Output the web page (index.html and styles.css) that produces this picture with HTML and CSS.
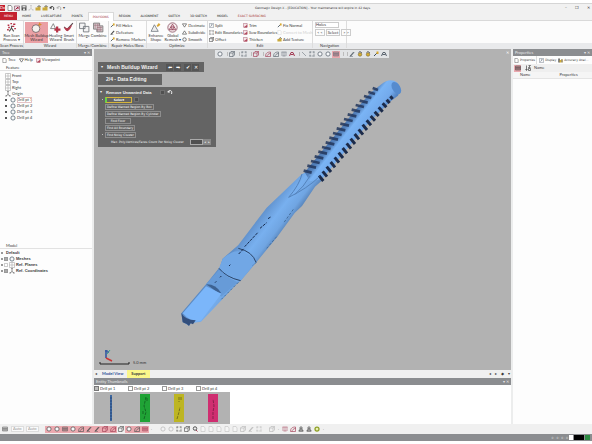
FILE: index.html
```html
<!DOCTYPE html>
<html lang="en">
<head>
<meta charset="utf-8">
<title>Geomagic Design X</title>
<link rel="stylesheet" href="styles.css">
</head>
<body>
<svg class="sprite" aria-hidden="true">
  <symbol id="page" viewBox="0 0 12 12"><path d="M2 1h6l2 3v7H2z" fill="#fff" stroke="currentColor"/></symbol>
  <symbol id="disk" viewBox="0 0 12 12"><path d="M1 1h10v10H1z" fill="#555"/><path d="M3 2h6v3H3zM4 7h4v4H4z" fill="#ddd"/></symbol>
  <symbol id="folder" viewBox="0 0 12 12"><path d="M1 5h4l1-2h5v8H1z" fill="#c9a93c"/><path d="M5 4l3-3 3 3" fill="none" stroke="#333" stroke-width="1.5"/></symbol>
  <symbol id="import" viewBox="0 0 12 12"><path d="M1 2h10v9H1z" fill="#eadde4" stroke="#6c3145"/><path d="M3 9l5-5v4" fill="none" stroke="#a22441" stroke-width="2"/></symbol>
  <symbol id="undo" viewBox="0 0 12 12"><path d="M3 5c4-4 8-1 6 5" fill="none" stroke="currentColor" stroke-width="2"/><path d="M0 6l5-4v6z" fill="currentColor"/></symbol>
  <symbol id="ball" viewBox="0 0 12 12"><circle cx="6" cy="6" r="4.2" fill="#f6f8fa" stroke="currentColor" stroke-width="1.5"/></symbol>
  <symbol id="cube" viewBox="0 0 12 12"><path d="M1 4l3-3h7v7l-3 3H1zM1 4h7v7M8 4l3-3" fill="none" stroke="currentColor" stroke-width="1.3"/></symbol>
  <symbol id="rect" viewBox="0 0 12 12"><path d="M2 2h8v8H2z" fill="none" stroke="currentColor" stroke-dasharray="2 1"/><path d="M1 1h2v2H1zM9 1h2v2H9zM1 9h2v2H1zM9 9h2v2H9z" fill="currentColor"/></symbol>
  <symbol id="mesh" viewBox="0 0 12 12"><path d="M1 2h10v8H1zM1 5h10M1 7.500h10M4 2v8M8 2v8" fill="none" stroke="currentColor"/></symbol>
  <symbol id="plane" viewBox="0 0 12 12"><path d="M1 1h10v10H1zM1 6h10M6 1v10" fill="#fff" stroke="#999"/></symbol>
  <symbol id="axes" viewBox="0 0 12 12"><path d="M6 1v6M6 7l-4 3M6 7l4 3" fill="none" stroke="#555" stroke-width="1.3"/><path d="M5 0h2v2H5zM1 9h2v2H1zM9 9h2v2H9z" fill="#555"/></symbol>
  <symbol id="pen" viewBox="0 0 12 12"><path d="M2 10l7-8 1 1-6 7z" fill="currentColor" stroke="currentColor"/><path d="M1 11h7" stroke="currentColor"/></symbol>
  <symbol id="line" viewBox="0 0 12 12"><path d="M2 2l8 8" stroke="currentColor"/></symbol>
  <symbol id="patch" viewBox="0 0 12 12"><path d="M1 11C1 4 5 2 11 2v9zM4 11c0-3 3-6 7-6" fill="none" stroke="currentColor" stroke-width="1.3"/></symbol>
  <symbol id="tee" viewBox="0 0 12 12"><path d="M1 2h10M6 2v8M3 10h6M2 2v8M10 2v8" fill="none" stroke="currentColor"/></symbol>
  <symbol id="arch" viewBox="0 0 12 12"><path d="M1 10l3-7h4l3 7M3 7h6" fill="none" stroke="currentColor" stroke-width="2"/></symbol>
  <symbol id="sort" viewBox="0 0 12 12"><path d="M3 1v9M1 8l2 3 2-3M7 1h4L7 5h4M7 7h4v4H7z" fill="none" stroke="currentColor" stroke-width="1.3"/></symbol>
  <symbol id="tri" viewBox="0 0 12 12"><path d="M6 2l5 8H1z" fill="none" stroke="currentColor" stroke-width="1.4"/></symbol>
  <symbol id="funnel" viewBox="0 0 12 12"><path d="M1 2h10L6 10z" fill="none" stroke="currentColor" stroke-width="1.4"/></symbol>
  <symbol id="gold" viewBox="0 0 12 12"><circle cx="6" cy="7" r="3.500" fill="#d5af35" stroke="#65552a"/><path d="M3 3l3-2 4 3" fill="none" stroke="#444" stroke-width="1.5"/></symbol>
  <symbol id="gear" viewBox="0 0 12 12"><circle cx="6" cy="6" r="4" fill="#e8eeb0" stroke="#8d9f25" stroke-width="2.500"/></symbol>
  <symbol id="find" viewBox="0 0 12 12"><circle cx="6" cy="5" r="3.500" fill="#eee" stroke="currentColor" stroke-width="2"/><path d="M8 8l3 3" stroke="#a33c54" stroke-width="2"/></symbol>
  <symbol id="tool" viewBox="0 0 12 12"><path d="M2 10l6-6" stroke="#3c4c59" stroke-width="2"/><path d="M7 1h4v5H7z" fill="#d8a62a"/></symbol>
  <symbol id="redbox" viewBox="0 0 12 12"><path d="M1 1h9v9H1z" fill="#f6e4e8" stroke="#8f3a4d"/><path d="M2 10l8-6v7H2z" fill="#b3475c"/></symbol>
  <symbol id="bluebox" viewBox="0 0 12 12"><path d="M1 1h10v10H1zM3 9l6-6M6 2v4" fill="#f4f5f7" stroke="#5b6674"/></symbol>
  <symbol id="person" viewBox="0 0 12 12"><path d="M4 2h4v4H4zM2 10l2-4h4l2 4zM1 10h10" fill="none" stroke="currentColor" stroke-width="1.4"/></symbol>
  <symbol id="chart" viewBox="0 0 12 12"><path d="M1 1h3v10H1z" fill="#333"/><path d="M4 5h3v6H4z" fill="#d5aa22"/><path d="M8 3h3v8H8z" fill="#7b651f"/></symbol>
  <symbol id="scan" viewBox="0 0 20 20"><path d="M3 6h3M8 3h3M13 4h4M4 10h3M11 8h4M2 14h3M15 12h3" stroke="#b52f44" stroke-width="2.500"/><path d="M6 17l4-6 4 6M10 11V7" fill="none" stroke="#555" stroke-width="2"/></symbol>
  <symbol id="build" viewBox="0 0 20 20"><circle cx="9" cy="12" r="7" fill="#f5f1ee" stroke="#6e6063" stroke-width="1.500"/><path d="M14 4l2-4 1 3 3 1-3 2-1 3-1-3-3-1z" fill="#d78d30"/></symbol>
  <symbol id="heal" viewBox="0 0 20 20"><path d="M1 12l5-9 4 9z" fill="none" stroke="#777" stroke-width="1.500"/><path d="M11 8h4v4h4v4h-4v3h-4v-3H8v-4h3z" fill="#b73346"/></symbol>
  <symbol id="brush" viewBox="0 0 20 20"><path d="M2 9l5 5L18 2" fill="none" stroke="#5a4a50" stroke-width="2"/><path d="M2 10c4 0 5 3 8 0 3-2 5-3 7-6-2 7-5 11-9 13-3-1-5-4-6-7z" fill="#b53a4c"/></symbol>
  <symbol id="merge" viewBox="0 0 20 20"><path d="M1 2h10v10H1zM8 8h10v10H8z" fill="#f4f4f5" stroke="#6c7177" stroke-width="1.500"/></symbol>
  <symbol id="combine" viewBox="0 0 20 20"><path d="M1 2h11v5h6v11H7v-5H1z" fill="#dccdd1" stroke="#777" stroke-width="1.500"/><path d="M4 3v9M8 3v14M11 3v14M14 8v9M2 6h9M7 10h10M7 14h10" stroke="#996b75"/></symbol>
  <symbol id="enhance" viewBox="0 0 20 20"><path d="M2 17L8 5l7 12z" fill="#eee" stroke="#727981" stroke-width="1.500"/><path d="M12 7l4-5 3 3-5 4z" fill="#d8a633"/></symbol>
  <symbol id="remesh" viewBox="0 0 20 20"><circle cx="10" cy="10" r="8.500" fill="#f5eaec" stroke="#8e5968" stroke-width="1.500"/><path d="M4 14l6-10 6 10zM7 9h6l-3 5z" fill="none" stroke="#944257" stroke-width="1.500"/></symbol>
</svg>

<header class="titlebar">
  <div class="quick">
    <button class="logo" aria-label="Application">Dx</button>
    <button aria-label="New"><svg><use href="#page"/></svg></button>
    <button aria-label="Import"><svg><use href="#import"/></svg></button>
    <button aria-label="Save"><svg><use href="#disk"/></svg></button>
    <button class="dim" aria-label="Settings"><svg><use href="#axes"/></svg></button>
    <button aria-label="Open"><svg><use href="#folder"/></svg></button>
    <button aria-label="Export"><svg><use href="#folder"/></svg></button>
    <button aria-label="Undo"><svg><use href="#undo"/></svg></button>
    <button class="dim" aria-label="Redo"><svg><use href="#undo"/></svg></button>
    <span>▾</span>
  </div>
  <h1>Geomagic Design X - [EDUCATION] - Your maintenance will expire in 42 days.</h1>
  <div class="window-buttons"><button aria-label="Minimize">–</button><button aria-label="Restore">❐</button><button aria-label="Close">✕</button></div>
</header>

<nav class="tabs">
  <button class="menu">MENU</button><button>HOME</button><button>LIVECAPTURE</button><button>POINTS</button><button class="active">POLYGONS</button><button>REGION</button><button>ALIGNMENT</button><button>SKETCH</button><button>3D SKETCH</button><button>MODEL</button><button class="red">EXACT SURFACING</button>
</nav>

<section class="ribbon">
  <div class="group">
    <div class="tools"><button class="big"><svg><use href="#scan"/></svg>Run Scan<br>Process ▾</button></div>
    <h2>Scan Process</h2>
  </div>
  <div class="group">
    <div class="tools wizards">
      <button class="big pressed"><svg><use href="#build"/></svg>Mesh Buildup<br>Wizard</button>
      <button class="big"><svg><use href="#heal"/></svg>Healing<br>Wizard</button>
      <button class="big"><svg><use href="#brush"/></svg>Smart<br>Brush</button>
    </div>
    <h2>Wizard</h2>
  </div>
  <div class="group">
    <div class="tools">
      <button class="big"><svg><use href="#merge"/></svg>Merge</button>
      <button class="big"><svg><use href="#combine"/></svg>Combine</button>
    </div>
    <h2>Merge/Combine</h2>
  </div>
  <div class="group">
    <div class="tools">
      <div class="stack">
        <button><svg><use href="#tool"/></svg>Fill Holes</button>
        <button><svg><use href="#pen"/></svg>Defeature</button>
        <button><svg><use href="#tool"/></svg>Remove Markers</button>
      </div>
    </div>
    <h2>Repair Holes/Boss</h2>
  </div>
  <div class="group">
    <div class="tools">
      <button class="big"><svg><use href="#enhance"/></svg>Enhance<br>Shape</button>
      <button class="big"><svg><use href="#remesh"/></svg>Global<br>Remesh ▾</button>
      <div class="stack">
        <button><svg><use href="#funnel"/></svg>Decimate</button>
        <button><svg><use href="#tri"/></svg>Subdivide</button>
        <button><svg><use href="#ball"/></svg>Smooth</button>
      </div>
    </div>
    <h2>Optimize</h2>
  </div>
  <div class="group">
    <div class="tools edit">
      <div class="stack">
        <button><svg><use href="#bluebox"/></svg>Split</button>
        <button><svg><use href="#rect"/></svg>Edit Boundaries</button>
        <button><svg><use href="#cube"/></svg>Offset</button>
      </div>
      <div class="stack">
        <button><svg><use href="#redbox"/></svg>Trim</button>
        <button><svg><use href="#redbox"/></svg>Sew Boundaries</button>
        <button><svg><use href="#redbox"/></svg>Thicken</button>
      </div>
      <div class="stack">
        <button><svg><use href="#tool"/></svg>Fix Normal</button>
        <button disabled><svg><use href="#page"/></svg>Convert to Mesh</button>
        <button><svg><use href="#folder"/></svg>Add Texture</button>
      </div>
    </div>
    <h2>Edit</h2>
  </div>
  <div class="group">
    <div class="tools nav">
      <select aria-label="Navigate by"><option>Holes</option></select>
      <div class="step"><button>&lt; &lt;</button><button>Select</button><button>&gt; &gt;</button></div>
    </div>
    <h2>Navigation</h2>
  </div>
  <div class="group last"><div class="tools"></div><h2></h2></div>
</section>

<main>
  <aside class="left">
    <header class="panel-head"><span>Tree</span><span class="pins">▾ ✕</span></header>
    <div class="panel-tabs"><button><svg><use href="#page"/></svg>Tree</button><button><svg><use href="#funnel"/></svg>Help</button><button><svg><use href="#redbox"/></svg>Viewpoint</button></div>
    <section class="feature">
      <h3>Feature</h3>
      <ul>
        <li><svg><use href="#plane"/></svg>Front</li>
        <li><svg><use href="#plane"/></svg>Top</li>
        <li><svg><use href="#plane"/></svg>Right</li>
        <li><svg><use href="#axes"/></svg>Origin</li>
        <li class="mesh"><i></i><svg><use href="#ball"/></svg><b>Drill pt 1</b></li>
        <li class="mesh"><i></i><svg><use href="#ball"/></svg>Drill pt 2</li>
        <li class="mesh"><i></i><svg><use href="#ball"/></svg>Drill pt 3</li>
        <li class="mesh"><i></i><svg><use href="#ball"/></svg>Drill pt 4</li>
      </ul>
    </section>
    <section class="model">
      <h3>Model</h3>
      <ul>
        <li class="root"><i></i>Default</li>
        <li><i></i><em></em><svg><use href="#ball"/></svg>Meshes</li>
        <li><i></i><em class="off"></em><svg><use href="#plane"/></svg>Ref. Planes</li>
        <li><i></i><em></em><svg><use href="#axes"/></svg>Ref. Coordinates</li>
      </ul>
    </section>
  </aside>

  <section class="center">
    <div class="viewport">
      <svg class="drill" viewBox="0 0 720 795" role="img" aria-label="Drill mesh">
        <defs>
          <linearGradient id="body" gradientUnits="userSpaceOnUse" x1="275" y1="400" x2="365" y2="468">
            <stop offset="0" stop-color="#527fb6"/><stop offset=".22" stop-color="#6597d3"/><stop offset=".5" stop-color="#78b0ef"/><stop offset=".75" stop-color="#70a5e2"/><stop offset="1" stop-color="#4a71a3"/>
          </linearGradient>
          <linearGradient id="flute" gradientUnits="userSpaceOnUse" x1="484" y1="165" x2="562" y2="226">
            <stop offset="0" stop-color="#3f5e8e"/><stop offset=".38" stop-color="#5482bd"/><stop offset=".52" stop-color="#7ab4f5"/><stop offset=".82" stop-color="#73aaec"/><stop offset="1" stop-color="#5485c5"/>
          </linearGradient>
        </defs>
        <path d="M396 312L424 300 448 318 455 332 435 350 396 408 374 429 322 500 258 578 212 632 196 646 158 687 93 755 62 760 57 767 48 762 38 756 34 730 108 643 150 590 158 566 205 525 290 413z" fill="url(#body)"/>
        <path d="M404 307L437 266 496 194 557 119 600 70 634 43Q660 22 682 38Q697 56 684 77L662 94 600 154 457 326 420 334z" fill="url(#flute)"/>
        <path d="M401 302l24 6M412 287l26 6M423 273l26 6M434 259l26 6M445 245l26 6M456 231l26 6M467 217l26 6M478 203l26 6M489 189l26 6M500 175l26 6M511 161l26 6M522 147l26 6M533 133l26 6M545 119l25 6M557 105l25 6M569 92l24 6M582 78l22 6M595 66l20 6M608 54l16 6" fill="none" stroke="#22365c" stroke-width="8" opacity=".85"/>
        <path d="M447 317l13 16M458 304l13 16M470 290l13 16M482 276l13 16M494 262l13 16M506 248l13 16M518 234l13 16M530 220l13 16M542 206l13 16M554 192l13 16M566 178l13 16M578 164l13 16M590 151l13 15M602 138l13 14M614 125l12 13M626 112l12 13M638 100l11 12M650 89l9 10M661 79l7 8" fill="none" stroke="#1c2b4a" stroke-width="9"/>
        <path d="M396 312Q388 345 356 382Q412 355 448 320M420 318Q402 350 374 374" fill="none" stroke="#5583bb" stroke-width="3"/>
        <path d="M158 566Q190 538 210 545Q247 552 258 577L212 632Q168 620 147 595z" fill="#71a7e5"/>
        <path d="M205 535Q248 545 258 577M147 595Q168 622 212 632" fill="none" stroke="#2b4366" stroke-width="3"/>
        <path d="M147 599Q174 623 202 637L154 680 108 643z" fill="#679bd8"/>
        <path d="M108 643Q138 642 154 670L145 668z" fill="#3d6292"/>
        <path d="M108 649L154 671 93 752Q65 759 38 730z" fill="#7bb6fa"/>
        <path d="M34 729Q45 750 77 751L69 763 62 760 57 768 50 762 38 757z" fill="#334f7c"/>
        <path d="M206 552L221 536M224 530L264 487M270 475L290 458M294 446L302 441M135 638l4-4M150 622l4-4M177 588l4-4" fill="none" stroke="#172b4e" stroke-width="3" stroke-dasharray="9 3"/>
        <path d="M320 500L290 535M260 576L248 586M205 637L154 688M370 418L340 460" stroke="#46709f" stroke-width="3" stroke-dasharray="8 5"/>
        <ellipse cx="679" cy="54" rx="12" ry="20" transform="rotate(-32 679 54)" fill="#568bce"/>
      </svg>

      <div class="view-tools">
        <button aria-label="Shading"><svg><use href="#ball"/></svg></button><span></span>
        <button aria-label="View cube"><svg><use href="#cube"/></svg></button><span></span>
        <button aria-label="View"><svg><use href="#rect"/></svg></button><span></span>
        <button class="wine" aria-label="Mesh"><svg><use href="#cube"/></svg></button><span></span>
        <button class="wine" aria-label="Region"><svg><use href="#patch"/></svg></button>
        <button aria-label="Surface"><svg><use href="#patch"/></svg></button>
        <button aria-label="Text"><svg><use href="#tee"/></svg></button>
        <button class="wine" aria-label="Curve"><svg><use href="#arch"/></svg></button><span></span>
        <button aria-label="Line select"><svg><use href="#line"/></svg></button>
        <button aria-label="Rectangle select"><svg><use href="#rect"/></svg></button>
        <button aria-label="Circle select"><svg><use href="#ball"/></svg></button>
        <button aria-label="Polyline select"><svg><use href="#ball"/></svg></button>
        <button class="on" aria-label="Freehand select"><svg><use href="#mesh"/></svg></button><span></span><span></span>
        <button aria-label="Paint"><svg><use href="#pen"/></svg></button>
        <button aria-label="Flood"><svg><use href="#gold"/></svg></button>
        <button aria-label="Extend"><svg><use href="#gold"/></svg></button>
        <button aria-label="Visible only"><svg><use href="#tool"/></svg></button>
        <button aria-label="More"><svg><use href="#arch"/></svg></button>
      </div>
      <span class="view-close">✕</span>

      <div class="wizard">
        <div class="card bar"><span>▾</span><h2>Mesh Buildup Wizard</h2><button aria-label="Back">⬅</button><button aria-label="Next">➡</button><button class="gap" aria-label="OK">✔</button><button aria-label="Cancel">✕</button></div>
        <div class="card stage"><h2>2/4 - Data Editing</h2></div>
        <div class="card form">
          <div class="form-head"><span>▾</span><h3>Remove Unwanted Data</h3><button class="sq" aria-label="Options"></button><button aria-label="Undo"><svg><use href="#undo"/></svg></button></div>
          <div class="row first"><button class="select">Select</button><button class="sq" aria-label="Clear"></button></div>
          <div class="row"><button>Define Wanted Region By Box</button></div>
          <div class="row"><button>Define Wanted Region By Cylinder</button></div>
          <div class="row"><button class="wide">Find Floor</button></div>
          <div class="row"><button>Find All Boundary</button></div>
          <div class="row first"><button>Find Noisy Cluster</button></div>
          <div class="count"><label for="count">Max. Poly-Vertices/Faces Count Per Noisy Cluster</label><input id="count" type="text"><button aria-label="Decrease">◂</button><button aria-label="Increase">▸</button></div>
        </div>
      </div>

      <div class="scale">
        <svg viewBox="0 0 34 18" role="img" aria-label="Axes and scale"><path d="M8 10V2" stroke="#2850a0" stroke-width="1.500"/><path d="M8 10l6 3" stroke="#c33" stroke-width="1.500"/><path d="M9 6l3-4" stroke="#3a8"/><path d="M7 3h3v2" fill="none" stroke="#2850a0"/><path d="M2 14v2h29v-2" fill="none" stroke="#222"/></svg>
        <span>5.0 mm</span>
      </div>
    </div>
    <div class="view-tabs"><span>◂</span><button class="blue">Model View</button><button class="yellow">Support</button><span class="pager"><i>◂</i><i>▸</i><i>◆</i><i>▾</i></span></div>
    <section class="thumbs">
      <header class="panel-head"><span>Entity Thumbnails</span><span class="pins">▾ ✕</span></header>
      <div class="thumb-grid">
        <figure><figcaption><input type="checkbox" id="d1" checked><label for="d1">Drill pt 1</label></figcaption><div><svg viewBox="0 0 10 28"><path d="M4 1h2v26H4z" fill="#3f689f"/><path d="M5 3v23" stroke="#29497d" stroke-dasharray="2 1"/></svg></div></figure>
        <figure><figcaption><input type="checkbox" id="d2"><label for="d2">Drill pt 2</label></figcaption><div><svg viewBox="0 0 10 28"><path d="M0 0h10v28H0z" fill="#20a336"/><path d="M4 25l2-7-2-6 2-9M7 4v4M3 17v3" fill="none" stroke="#126a23" stroke-dasharray="3 1"/></svg></div></figure>
        <figure><figcaption><input type="checkbox" id="d3"><label for="d3">Drill pt 3</label></figcaption><div><svg viewBox="0 0 10 28"><path d="M0 0h10v28H0z" fill="#bdb522"/><path d="M3 25l2-7 1-5M5 3v5M7 3v4" fill="none" stroke="#79731b" stroke-dasharray="3 1"/></svg></div></figure>
        <figure><figcaption><input type="checkbox" id="d4"><label for="d4">Drill pt 4</label></figcaption><div><svg viewBox="0 0 10 28"><path d="M0 0h10v28H0z" fill="#cf2e70"/><path d="M5 25v-7l1-6-1-7" fill="none" stroke="#8b1f4c" stroke-dasharray="3 1"/></svg></div></figure>
      </div>
    </section>
  </section>

  <aside class="right">
    <header class="panel-head"><span>Properties</span><span class="pins">▾ ✕</span></header>
    <div class="panel-tabs"><button class="current"><svg><use href="#page"/></svg>Properties</button><button><svg><use href="#bluebox"/></svg>Display</button><button><svg><use href="#chart"/></svg>Accuracy Anal...</button></div>
    <div class="sort"><button class="on" aria-label="Categorized"><svg><use href="#mesh"/></svg></button><button aria-label="Sort"><svg><use href="#sort"/></svg></button><span>Name</span></div>
    <table><thead><tr><th>Name</th><th>Properties</th></tr></thead></table>
  </aside>
</main>

<footer>
  <div class="filters">
    <button class="pick" aria-label="Pick"><svg><use href="#mesh"/></svg></button>
    <select aria-label="Linear unit"><option>Auto</option></select>
    <select aria-label="Angular unit"><option>Auto</option></select>
    <button class="on start" aria-label="Filter mesh"><svg><use href="#ball"/></svg></button>
    <button class="on" aria-label="Filter region"><svg><use href="#ball"/></svg></button>
    <button class="on" aria-label="Filter cloud"><svg><use href="#mesh"/></svg></button>
    <button class="on" aria-label="Filter body"><svg><use href="#ball"/></svg></button>
    <button class="on" aria-label="Filter face"><svg><use href="#patch"/></svg></button>
    <button class="on" aria-label="Filter edge"><svg><use href="#pen"/></svg></button>
    <button class="on" aria-label="Filter loop"><svg><use href="#pen"/></svg></button>
    <button class="on wine" aria-label="Filter vertex"><svg><use href="#cube"/></svg></button>
    <button class="on wine" aria-label="Filter plane"><svg><use href="#patch"/></svg></button>
    <button aria-label="Filter vector"><svg><use href="#cube"/></svg></button>
    <button class="on" aria-label="Filter point"><svg><use href="#ball"/></svg></button>
    <button class="on" aria-label="Filter polyline"><svg><use href="#patch"/></svg></button>
    <button class="on wine" aria-label="Filter sketch"><svg><use href="#mesh"/></svg></button>
    <span>.</span><span></span>
    <button class="dim" aria-label="Hide"><svg><use href="#ball"/></svg></button>
    <button class="dim" aria-label="Show"><svg><use href="#ball"/></svg></button>
    <button aria-label="Select all"><svg><use href="#rect"/></svg></button>
    <button aria-label="Invert"><svg><use href="#cube"/></svg></button>
    <button aria-label="Find"><svg><use href="#find"/></svg></button>
    <button class="dim" aria-label="Copy"><svg><use href="#page"/></svg></button>
    <button class="dim" aria-label="Paste"><svg><use href="#page"/></svg></button>
    <button class="dim" aria-label="Front"><svg><use href="#page"/></svg></button>
    <button class="dim" aria-label="Rear"><svg><use href="#page"/></svg></button>
    <button class="dim" aria-label="Side"><svg><use href="#page"/></svg></button>
    <button class="dim" aria-label="Section"><svg><use href="#cube"/></svg></button>
    <button class="dim" aria-label="Cut"><svg><use href="#pen"/></svg></button>
    <button class="dim" aria-label="Split"><svg><use href="#rect"/></svg></button>
    <span></span>
    <button class="dim" aria-label="Group"><svg><use href="#cube"/></svg></button>
    <span>.</span>
    <button class="wine" aria-label="Distance"><svg><use href="#tee"/></svg></button>
    <button class="wine" aria-label="Angle"><svg><use href="#patch"/></svg></button>
    <button aria-label="Radius"><svg><use href="#person"/></svg></button>
    <button aria-label="Section measure"><svg><use href="#person"/></svg></button>
    <button aria-label="Deviation"><svg><use href="#gear"/></svg></button>
    <span>.</span>
  </div>
  <div class="status"><span>0 : 0 : 0 : 0</span><i class="white"></i><i class="black"></i><i class="green"></i></div>
</footer>
</body>
</html>
```
FILE: styles.css
```css
* { box-sizing: border-box; margin: 0; padding: 0; }
body {
  display: flex; flex-direction: column; min-height: 100vh;
  padding: 3px 0; background: #fff; color: #3a3a3a;
  font: 4px/6px Lato, "Liberation Sans", sans-serif;
}
button, select, input { font: inherit; color: inherit; border: 0; background: none; border-radius: 0; }
button { white-space: nowrap; }
select { appearance: none; }
h1, h2, h3 { font-size: 4px; font-weight: 400; }
ul { list-style: none; }
svg { display: block; width: 6px; height: 6px; flex: none; }
i, em, b { font-style: normal; font-weight: inherit; }
.sprite { position: absolute; width: 0; height: 0; }
.wine { color: #a33c54; }
.dim { opacity: .35; }
.on { background: #eba9af; }
.titlebar h1, .tabs, .row, .count, .right .panel-tabs, .status { font-family: "DejaVu Sans", sans-serif; font-size: 3px; }

.titlebar { display: grid; grid-template-columns: 1fr auto 1fr; align-items: center; height: 9px; background: #f1f1f1; border-top: 1px solid #d5d5d5; }
.titlebar h1 { margin-left: 34px; color: #333; }
.quick { display: flex; align-items: center; gap: 1px; }
.logo { background: #c4202e; color: #fff; width: 5px; height: 6px; margin-right: 1px; overflow: hidden; }
.window-buttons { display: flex; justify-content: flex-end; gap: 8px; padding-right: 2px; }

.tabs { display: flex; height: 9px; background: #f1f1f1; border-bottom: 1px solid #d9d9d9; }
.tabs button { padding: 0 5px; color: #111; }
.tabs .menu { width: 17px; padding: 0; background: #c4202e; color: #fff; }
.tabs .active { padding: 0 4px; background: #fff; color: #a63848; border: 1px solid #d9d9d9; border-bottom: 0; margin-bottom: -1px; }
.tabs .red { color: #a63030; }

.ribbon { display: grid; grid-template-columns: 24px 53px 32px 38px 61px 105px 34px 1fr; height: 28px; background: #fcfcfc; border-bottom: 1px solid #e9eaec; }
.group { display: flex; flex-direction: column; border-right: 1px solid #ddd; min-width: 0; }
.group.last { border: 0; }
.group h2 { height: 5px; background: #e9eaec; text-align: center; line-height: 5px; white-space: nowrap; }
.tools { flex: 1; display: flex; justify-content: space-around; padding: 1px 1px 0; min-height: 0; }
.wizards { justify-content: flex-start; gap: 1px; }
.big { display: flex; flex-direction: column; align-items: center; line-height: 4px; }
.big svg { width: 11px; height: 11px; margin-bottom: 1px; }
.pressed { background: #eaa0a5; width: 23px; }
.stack { display: flex; flex-direction: column; align-items: flex-start; }
.stack button { display: flex; align-items: center; gap: 1px; height: 7px; }
.stack svg { width: 5px; height: 5px; }
.stack button:disabled { color: #bbb; opacity: .7; }
.edit { display: grid; grid-template-columns: 34px 34px 34px; justify-content: start; }
.nav { flex-direction: column; justify-content: flex-start; align-items: flex-start; gap: 1px; padding: 1px 2px 0; }
.nav select { width: 24px; height: 6px; border: 1px solid #ccc; background: #fff; line-height: 4px; }
.step { display: flex; gap: 1px; }
.step button { height: 7px; padding: 0 1px; border: 1px solid #ccc; line-height: 5px; }

main { flex: 1; display: grid; grid-template-columns: 92px minmax(0, 1fr) 79px; column-gap: 2px; background: #eceded; }
.left, .right { display: flex; flex-direction: column; background: #fdfdfd; }
.panel-head { display: flex; justify-content: space-between; height: 7px; padding: 0 2px; background: #8b8d90; color: #e8e8e8; line-height: 7px; }
.panel-tabs { display: flex; gap: 3px; height: 8px; padding: 0 2px; }
.panel-tabs button { display: flex; align-items: center; gap: 1px; }
.panel-tabs svg { width: 5px; height: 5px; }
.feature { flex: 177; }
.model { flex: 182; }
.left h3 { height: 7px; padding-left: 6px; line-height: 7px; border-bottom: 1px solid #e2e2e2; }
.left ul { padding-top: 1px; }
.feature ul { padding-top: 2px; }
.left li { display: flex; align-items: center; gap: 1px; height: 6px; padding-left: 5px; line-height: 6px; }
.left li svg { color: #50616f; }
.left i { width: 2px; height: 2px; background: #999; }
.left .mesh i { margin-right: 2px; background: #555; }
.left b { background: #fff; outline: 1px solid #e3c3c6; outline-offset: -1px; }
.model li { padding-left: 1px; font: 700 4px/6px "Liberation Sans", sans-serif; }
.model em { width: 4px; height: 4px; background: #aaa; border: 1px solid #999; }
.model em.off { background: #fff; border-color: #ccc; }
.root i { margin-right: 2px; }

.center { display: flex; flex-direction: column; min-width: 0; }
.viewport { position: relative; flex: 1; background: #b2b2b2; }
.drill { position: absolute; left: 76px; top: 21px; width: 240px; height: 265px; }
.view-tools { position: absolute; left: 121px; top: 1px; display: flex; align-items: center; height: 8px; padding: 0 1px; background: #e2e4e6; color: #59636d; }
.view-tools button { display: grid; place-items: center; width: 8px; height: 7px; }
.view-tools span { width: 4px; height: 4px; border-right: 1px solid #bbb; }
.view-close { position: absolute; right: 2px; top: 1px; color: #fff; }

.wizard { position: absolute; left: 4px; top: 13px; display: flex; flex-direction: column; align-items: flex-start; gap: 2px; color: #f2f2f2; }
.card { background: #646464; }
.wizard h2 { font: 700 5px/6px "Liberation Sans", sans-serif; }
.bar { display: flex; align-items: center; gap: 1px; height: 10px; width: 106px; padding: 0 5px 0 3px; }
.bar span { width: 5px; }
.form-head span { width: 4px; }
.bar h2 { flex: 1; white-space: nowrap; }
.bar button { width: 7px; height: 7px; font-size: 5px; color: #fff; background: #555; }
.bar .gap { margin-left: 2px; }
.stage { padding: 2px 8px; height: 11px; width: 64px; white-space: nowrap; }
.form { width: 118px; padding: 1px 2px; }
.form-head { display: flex; align-items: center; gap: 2px; height: 8px; }
.form h3 { width: 52px; font: 700 4px/7px "Liberation Sans", sans-serif; white-space: nowrap; }
.sq { width: 5px; height: 5px; background: #505050; border: 1px solid #717171; }
.row { display: flex; align-items: center; gap: 2px; height: 7px; padding-left: 5px; }
.row.first { padding-left: 2px; }
.row.first::before { content: ""; width: 1px; height: 1px; background: #bbb; }
.row button:not(.sq) { height: 6px; padding: 0 1px; line-height: 4px; border: 1px solid #8e8e8e; color: #fff; }
.row .wide { width: 26px; }
.row button.select:not(.sq) { width: 27px; border-color: #d6b53b; border-left: 2px solid #63d346; font-weight: 700; }
.count { display: flex; align-items: center; height: 8px; padding: 0 3px 0 11px; }
.count label { flex: 1; white-space: nowrap; }
.count input { width: 13px; height: 6px; background: #505050; border: 1px solid #aaa; }
.count button { width: 4px; height: 6px; background: #888; line-height: 6px; }
.scale { position: absolute; left: 4px; bottom: 4px; display: flex; align-items: flex-end; gap: 1px; color: #333; }
.scale svg { width: 34px; height: 18px; }

.view-tabs { display: flex; height: 8px; background: #f0f0f0; }
.view-tabs span { padding: 1px; }
.view-tabs button { padding: 0 4px; font-weight: 700; }
.view-tabs .blue { color: #2d5298; }
.view-tabs .yellow { background: #fbf78a; }
.view-tabs .pager { display: flex; gap: 4px; margin-left: auto; }
.thumbs { background: #fff; height: 46px; }
.thumb-grid { display: grid; grid-template-columns: repeat(4, 34px); }
figcaption { display: flex; align-items: center; gap: 1px; height: 7px; }
figcaption input { appearance: none; width: 5px; height: 5px; border: 1px solid #999; background: #fff; }
figcaption input:checked { background: #bbb; border-color: #777; }
figure div { display: grid; place-items: center; height: 32px; background: #b2b2b2; }
figure svg { width: 10px; height: 28px; }

.right .panel-tabs { gap: 2px; padding: 0 1px; }
.right .current { border-right: 1px solid #ddd; padding-right: 1px; }
.sort { display: flex; align-items: center; gap: 3px; height: 8px; padding: 0 1px; background: #efefef; }
.sort button { display: grid; place-items: center; width: 7px; height: 7px; }
.right table { width: 100%; border-collapse: collapse; table-layout: fixed; }
.right th { height: 6px; padding-left: 7px; font-weight: 400; text-align: left; background: #f5f5f5; border-bottom: 1px solid #e4e4e4; }

.filters { display: flex; align-items: center; height: 10px; padding-left: 1px; background: #f0f0f0; color: #555; }
.filters .wine { color: #a33c54; }
.filters button { display: grid; place-items: center; width: 8px; height: 7px; flex: none; }
.filters select { width: 13px; height: 6px; margin-left: 2px; padding-left: 1px; border: 1px solid #ddd; background: #fafafa; color: #999; line-height: 4px; }
.filters .start { margin-left: 6px; }
.filters span { width: 5px; text-align: center; }
.status { display: flex; align-items: center; justify-content: flex-end; gap: 1px; height: 7px; padding-right: 2px; background: #8b8d90; color: #ddd; }
.status i { height: 5px; }
.white { width: 4px; background: #fff; }
.black { width: 10px; background: #000; }
.green { width: 5px; background: #2c8b42; }
```
